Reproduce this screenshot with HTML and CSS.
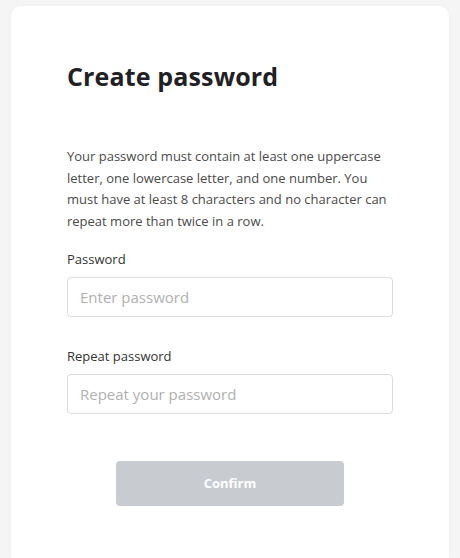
FILE: index.html
```html
<!DOCTYPE html>
<html lang="en">
<head>
<meta charset="utf-8">
<title>Create password</title>
<link rel="stylesheet" href="styles.css">
</head>
<body>
<main class="card">
  <h1 class="title">Create password</h1>
  <p class="intro">Your password must contain at least one uppercase letter, one lowercase letter, and one number. You must have at least 8 characters and no character can repeat more than twice in a row.</p>
  <form class="form">
    <label class="field">
      <span class="label">Password</span>
      <input class="input" type="password" placeholder="Enter password">
    </label>
    <label class="field">
      <span class="label">Repeat password</span>
      <input class="input" type="password" placeholder="Repeat your password">
    </label>
    <div class="actions">
      <button class="btn" type="button" disabled>Confirm</button>
    </div>
  </form>
</main>
</body>
</html>
```

FILE: styles.css
```css
html, body {
  margin: 0;
  padding: 0;
}
body {
  background: #f5f5f5;
  font-family: "Open Sans", "Noto Sans", sans-serif;
  height: 558px;
  overflow: hidden;
}
.card {
  margin: 6px 11px 0;
  background: #ffffff;
  border-radius: 10px 10px 0 0;
  box-shadow: 0 0 4px rgba(0, 0, 0, 0.03);
  padding: 52px 56px 0;
  height: 552px;
  box-sizing: border-box;
}
.title {
  margin: 0;
  font-family: "Open Sans", sans-serif;
  font-weight: 700;
  font-size: 25px;
  line-height: 36px;
  color: #1f2124;
  letter-spacing: 0.15px;
}
.intro {
  margin: 52px 0 0;
  font-size: 13px;
  line-height: 21.7px;
  color: #4a4a4a;
}
.form {
  display: flex;
  flex-direction: column;
  margin-top: 16px;
}
.field {
  display: flex;
  flex-direction: column;
  margin-bottom: 29px;
}
.label {
  font-size: 13px;
  line-height: 20px;
  color: #333;
  margin-bottom: 8px;
}
.input {
  box-sizing: border-box;
  height: 40px;
  border: 1px solid #dcdcdc;
  border-radius: 4px;
  padding: 0 12px;
  font-family: inherit;
  font-size: 15px;
  color: #333;
  outline: none;
}
.input::placeholder {
  color: #b0b0b0;
}
.actions {
  display: flex;
  justify-content: center;
  margin-top: 18px;
}
.btn {
  width: 228px;
  height: 45px;
  border: none;
  border-radius: 4px;
  background: #c8cbcf;
  color: #ffffff;
  font-family: inherit;
  font-weight: 700;
  font-size: 13px;
}
```
